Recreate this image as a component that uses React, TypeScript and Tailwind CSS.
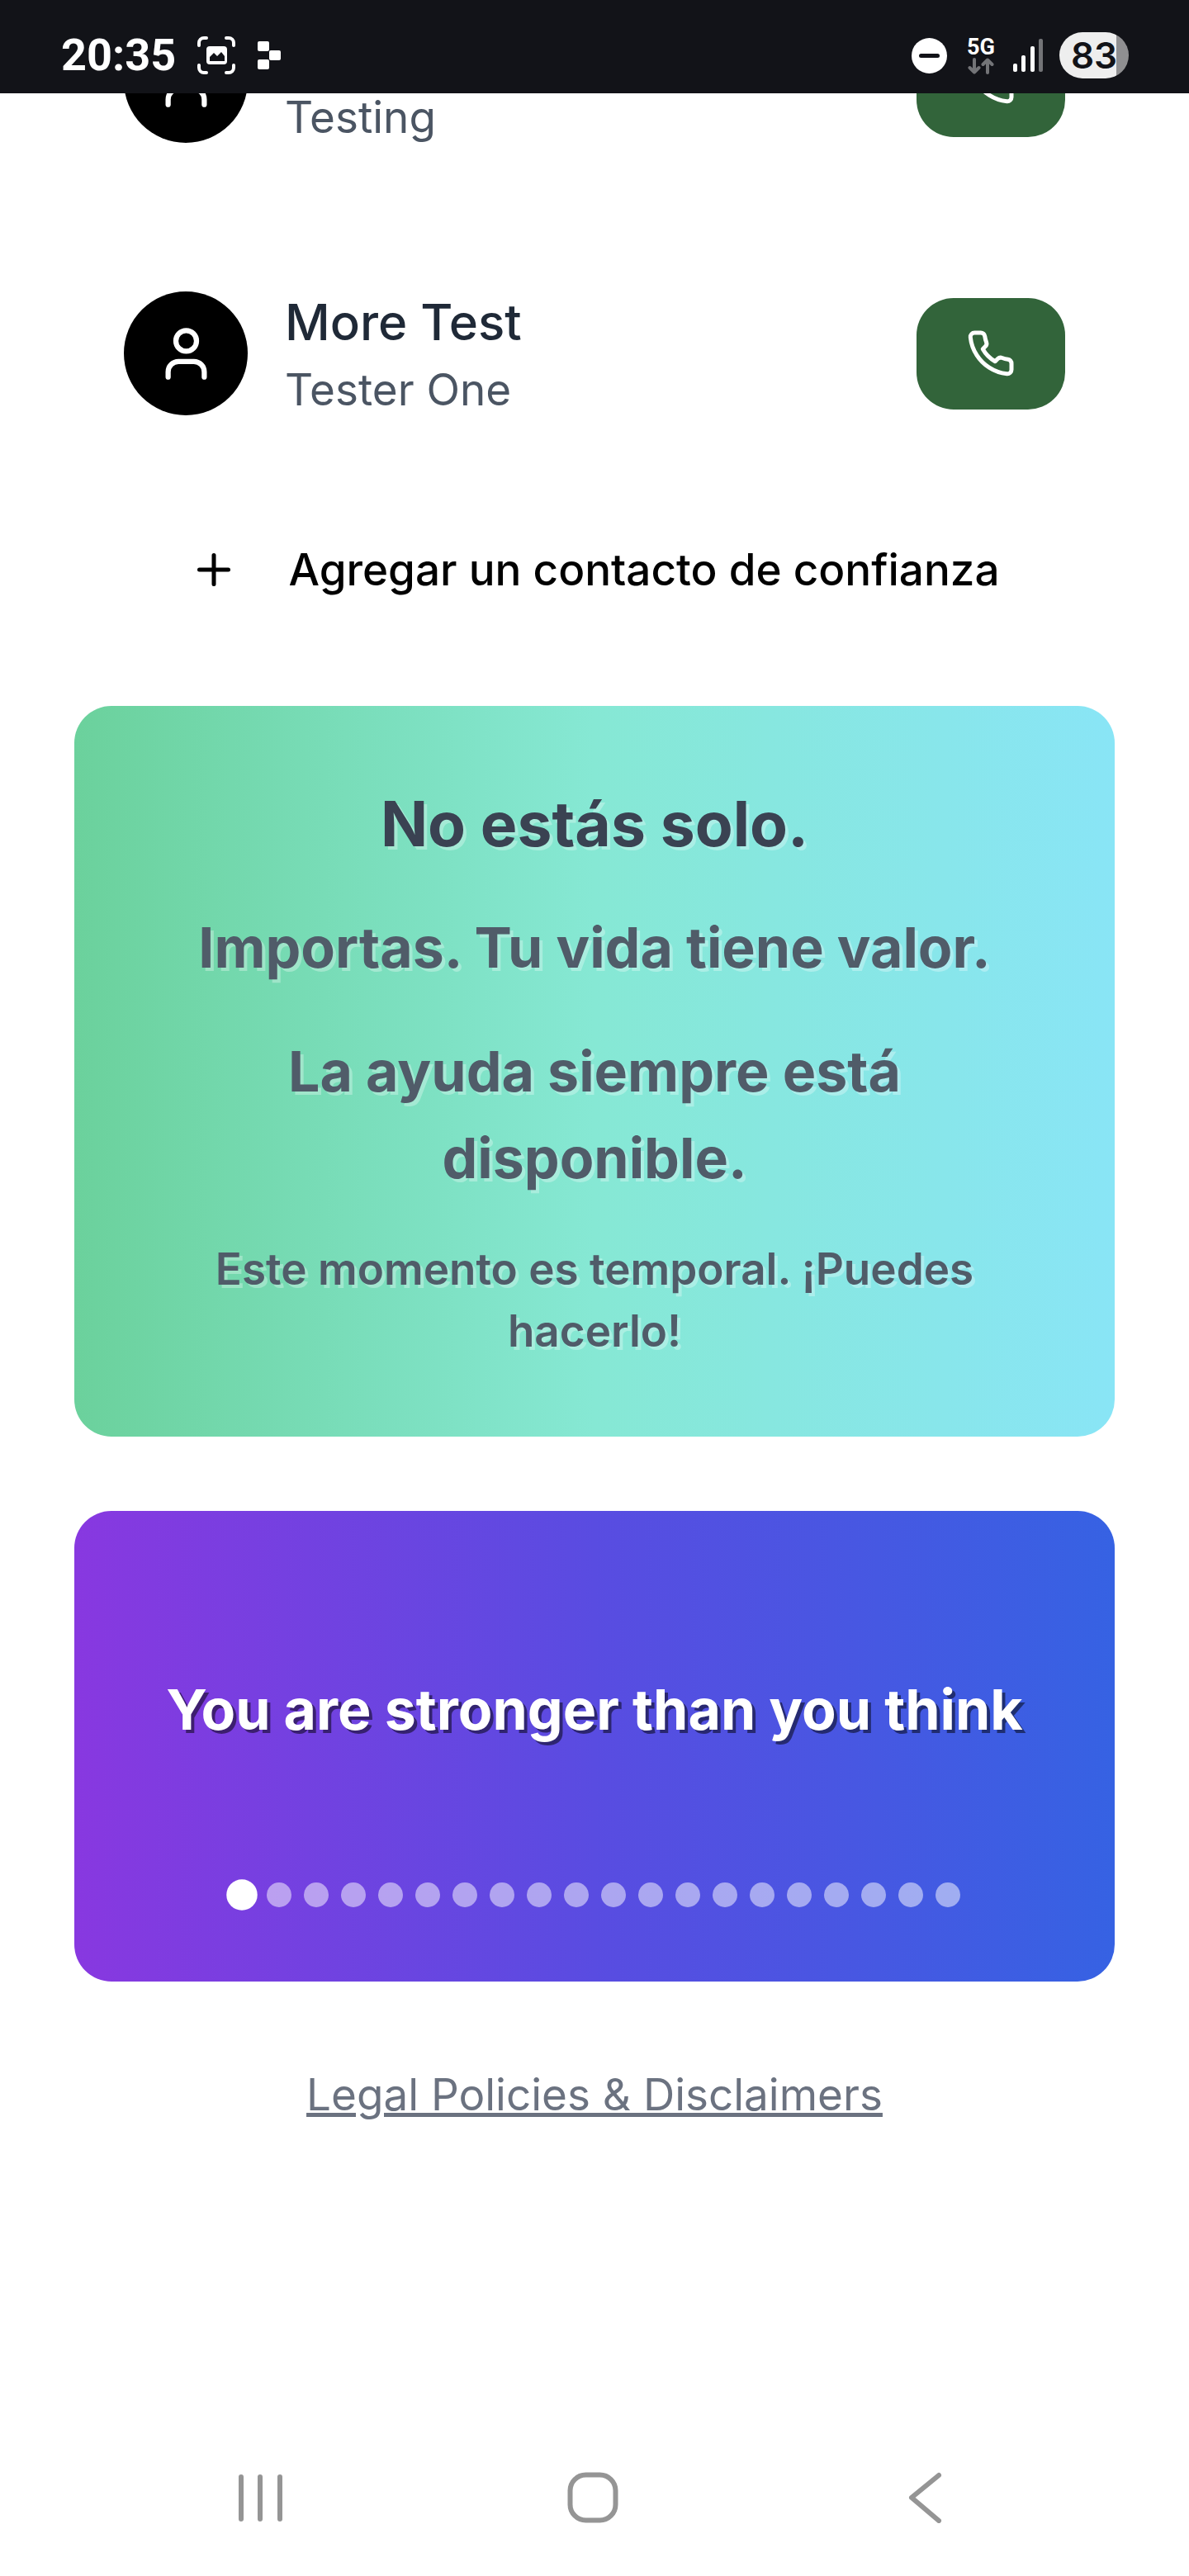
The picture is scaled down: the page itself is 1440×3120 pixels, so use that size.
import React, { useState } from "react";

const contacts = [
  { name: "Test", detail: "Testing" },
  { name: "More Test", detail: "Tester One" },
];

function UserIcon() {
  return (
    <svg className="size-[75px]" viewBox="0 0 24 24" fill="none" stroke="currentColor" strokeWidth="2" strokeLinecap="round" strokeLinejoin="round" aria-hidden="true">
      <path d="M19 21v-2a4 4 0 0 0-4-4H9a4 4 0 0 0-4 4v2" />
      <circle cx="12" cy="7" r="4" />
    </svg>
  );
}

function PhoneIcon() {
  return (
    <svg className="size-[60px]" viewBox="0 0 24 24" fill="none" stroke="currentColor" strokeWidth="2" strokeLinecap="round" strokeLinejoin="round" aria-hidden="true">
      <path d="M22 16.92v3a2 2 0 0 1-2.18 2 19.79 19.79 0 0 1-8.63-3.07 19.5 19.5 0 0 1-6-6 19.79 19.79 0 0 1-3.07-8.67A2 2 0 0 1 4.11 2h3a2 2 0 0 1 2 1.72 12.84 12.84 0 0 0 .7 2.81 2 2 0 0 1-.45 2.11L8.09 9.91a16 16 0 0 0 6 6l1.27-1.27a2 2 0 0 1 2.11-.45 12.84 12.84 0 0 0 2.81.7A2 2 0 0 1 22 16.92z" />
    </svg>
  );
}

function StatusBar() {
  return (
    <header className="fixed inset-x-0 top-0 z-10 flex h-[113px] items-center justify-between bg-[#121318] pt-[21px] pr-[73px] pl-[74px] text-white">
      <div className="flex items-center">
        <span className="font-['Roboto'] text-[54px] leading-[60px] font-bold">20:35</span>
        <svg className="ml-[25px] h-[48px] w-[48px]" viewBox="0 0 48 48" fill="none" aria-hidden="true">
          <g stroke="#fff" strokeWidth="4" strokeLinecap="round">
            <path d="M3 12V9a6 6 0 0 1 6-6h3" />
            <path d="M36 3h3a6 6 0 0 1 6 6v3" />
            <path d="M45 36v3a6 6 0 0 1-6 6h-3" />
            <path d="M12 45H9a6 6 0 0 1-6-6v-3" />
          </g>
          <rect x="12" y="13" width="25" height="22" rx="4" fill="#fff" />
          <path d="M16 31v-5l5-5 4 4 5-5 4 5v6z" fill="#121318" />
        </svg>
        <svg className="ml-[26px] h-[34px] w-[28px]" viewBox="0 0 28 34" fill="#fff" aria-hidden="true">
          <rect x="0" y="0" width="14" height="12" rx="2" />
          <rect x="14" y="11" width="14" height="12" rx="2" />
          <rect x="0" y="22" width="14" height="12" rx="2" />
        </svg>
      </div>
      <div className="flex items-center">
        <svg className="size-[43px]" viewBox="0 0 43 43" aria-hidden="true">
          <circle cx="21.5" cy="21.5" r="21.5" fill="#fff" />
          <path d="M11.500 21.500h20" stroke="#121318" strokeWidth="5" strokeLinecap="round" />
        </svg>
        <div className="ml-[24px] flex w-[34px] flex-col items-center">
          <span className="font-['Roboto'] text-[27px] leading-[24px] font-bold">5G</span>
          <svg className="mt-[1px] h-[20px] w-[32px]" viewBox="0 0 32 20" fill="none" stroke="#737477" strokeWidth="4" strokeLinecap="round" strokeLinejoin="round" aria-hidden="true">
            <path d="M8 2v15M2.500 12L8 17.500l5.500-5.500" />
            <path d="M24 18V3M18.500 8L24 2.500 29.500 8" />
          </svg>
        </div>
        <svg className="ml-[22px] h-[40px] w-[36px]" viewBox="0 0 36 40" aria-hidden="true">
          <rect x="0" y="30" width="5" height="10" rx="2" fill="#fff" />
          <rect x="10" y="20" width="5" height="20" rx="2" fill="#fff" />
          <rect x="21" y="9" width="5" height="31" rx="2" fill="#fff" />
          <rect x="31" y="0" width="5" height="40" rx="2" fill="#737477" />
        </svg>
        <div className="ml-[20px] flex h-[56px] w-[84px] items-center justify-center rounded-full bg-linear-to-r from-[#eeeeee] from-[82%] to-[#8f8f91] to-[82%] font-['Inter'] text-[44px] leading-[56px] font-semibold text-[#121318]">
          83
        </div>
      </div>
    </header>
  );
}

function ContactRow({ name, detail }: { name: string; detail: string }) {
  return (
    <li className="flex h-[330px] items-center px-[60px]">
      <div className="flex size-[150px] shrink-0 items-center justify-center rounded-full bg-black text-white">
        <UserIcon />
      </div>
      <div className="ml-[45px] flex-1 pb-[2px]">
        <p className="text-[60px] leading-[90px] font-medium text-[#1f2937]">{name}</p>
        <p className="text-[53px] leading-[75px] text-[#4b5563]">{detail}</p>
      </div>
      <button type="button" aria-label={`Call ${name}`} className="flex h-[135px] w-[180px] items-center justify-center rounded-[45px] bg-[#32643a] text-white">
        <PhoneIcon />
      </button>
    </li>
  );
}

function MessageCarousel() {
  const [active, setActive] = useState(0);
  return (
    <section className="mt-[90px] flex h-[570px] flex-col items-center rounded-[45px] bg-linear-to-r/srgb from-[#8838e0] via-[#594ce1] to-[#3662e3] px-[60px] pt-[60px]">
      <div className="flex h-[360px] items-center">
        <p className="text-center text-[68px] leading-[105px] font-bold text-white [text-shadow:4px_4px_0_rgba(0,0,0,0.5)]">
          You are stronger than you think
        </p>
      </div>
      <div className="mt-[30px] flex gap-[15px]">
        {Array.from({ length: 20 }, (_, i) => (
          <button
            key={i}
            type="button"
            aria-label={`Message ${i + 1}`}
            onClick={() => setActive(i)}
            className={
              i === active
                ? "size-[30px] scale-125 rounded-full bg-white"
                : "size-[30px] rounded-full bg-white/50"
            }
          />
        ))}
      </div>
    </section>
  );
}

function NavBar() {
  return (
    <nav aria-label="System" className="fixed inset-x-0 bottom-0 flex h-[190px] items-center justify-between pr-[288px] pl-[284px] text-[#959595]">
      <button type="button" aria-label="Recent apps">
        <svg className="h-[62px] w-[62px]" viewBox="0 0 62 62" fill="none" stroke="currentColor" strokeWidth="6" strokeLinecap="round" aria-hidden="true">
          <path d="M8 6v51M31 6v51M55 6v51" />
        </svg>
      </button>
      <button type="button" aria-label="Home">
        <svg className="h-[62px] w-[62px]" viewBox="0 0 62 62" fill="none" stroke="currentColor" strokeWidth="6" aria-hidden="true">
          <rect x="3.500" y="3.500" width="55" height="55" rx="19" />
        </svg>
      </button>
      <button type="button" aria-label="Back">
        <svg className="h-[62px] w-[62px]" viewBox="0 0 62 62" fill="none" stroke="currentColor" strokeWidth="6" strokeLinecap="round" strokeLinejoin="round" aria-hidden="true">
          <path d="M47 4L14 31l33 28" />
        </svg>
      </button>
    </nav>
  );
}

export default function App() {
  return (
    <div className="min-h-screen bg-white font-['Inter',sans-serif]">
      <StatusBar />
      <main className="-mt-[67px] px-[90px] pb-[189px]">
        <ul>
          {contacts.map((c) => (
            <ContactRow key={c.name} name={c.name} detail={c.detail} />
          ))}
        </ul>
        <button type="button" className="mt-[22px] flex h-[150px] w-full items-center justify-center gap-[60px] text-black">
          <svg className="size-[60px]" viewBox="0 0 24 24" fill="none" stroke="currentColor" strokeWidth="2" strokeLinecap="round" aria-hidden="true">
            <path d="M5 12h14M12 5v14" />
          </svg>
          <span className="text-[53px] leading-[75px] font-medium">Agregar un contacto de confianza</span>
        </button>
        <section className="mt-[90px] rounded-[45px] bg-linear-to-r/srgb from-[#6bd19c] via-[#86e8d4] to-[#89e5f6] px-[120px] py-[90px] text-center text-[#505c69] [text-shadow:4px_4px_0_rgba(255,255,255,0.3)]">
          <h2 className="text-[75px] leading-[105px] font-bold text-[#3a4252]">No estás solo.</h2>
          <p className="mt-[45px] text-[68px] leading-[105px] font-bold">Importas. Tu vida tiene valor.</p>
          <p className="mt-[45px] text-[68px] leading-[105px] font-bold">La ayuda siempre está disponible.</p>
          <p className="mt-[45px] text-[53px] leading-[75px] font-semibold">Este momento es temporal. ¡Puedes hacerlo!</p>
        </section>
        <MessageCarousel />
        <p className="mt-[100px] text-center">
          <a href="#legal" className="text-[53px] leading-[75px] text-[#6b7280] underline decoration-[5px]">Legal Policies &amp; Disclaimers</a>
        </p>
      </main>
      <NavBar />
    </div>
  );
}
